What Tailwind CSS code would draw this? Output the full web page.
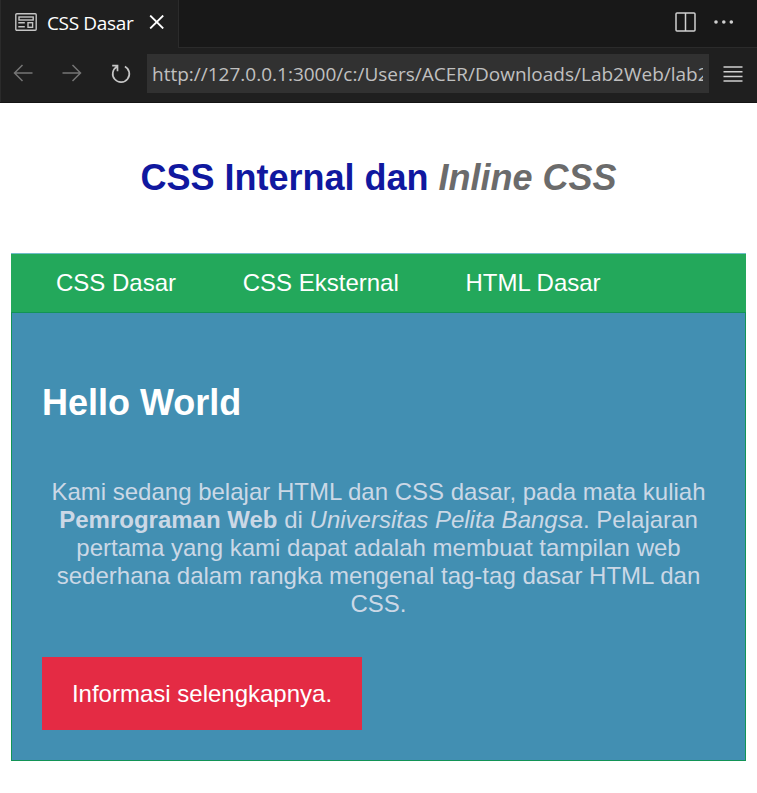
<!DOCTYPE html>
<html lang="id">
<head>
<meta charset="utf-8">
<title>CSS Dasar</title>
<script src="https://cdn.jsdelivr.net/npm/@tailwindcss/browser@4"></script>
</head>
<body class="bg-white w-[757px] h-[793px] overflow-hidden font-['Liberation_Sans',Arial,sans-serif]">
<header class="h-[103px] bg-[#1f1f1f] border-b border-[#141414] font-['Open_Sans',sans-serif]">
  <div class="flex h-12">
    <div class="flex w-[179px] items-center border-x border-[#2b2b2b] pl-[14px] text-white">
      <svg class="-mt-1 h-[18px] w-[22px] shrink-0" viewBox="0 0 22 18" fill="none" stroke="#c5c5c5" stroke-width="1.4"><rect x=".8" y=".8" width="20.4" height="16.4" rx="1"/><rect x="4" y="4" width="14.2" height="3"/><path d="M3.3 9.7h6.5M3.3 13.7h6.5"/><rect x="13" y="9.7" width="4.6" height="4.6"/></svg>
      <span class="-mt-[2px] ml-[10px] w-[88px] whitespace-nowrap text-[19px] leading-6 tracking-[-0.35px]">CSS Dasar</span>
      <svg class="-mt-1 ml-[14px] h-[14px] w-[15px] shrink-0" viewBox="0 0 15 14" fill="none" stroke="#fff" stroke-width="1.8"><path d="M1.2 .5l13 13M14.2 .5l-13 13"/></svg>
    </div>
    <div class="flex flex-1 items-center justify-end border-b border-[#2b2b2b] bg-[#181818] pr-[23px]">
      <svg class="-mt-1 h-5 w-[21px]" viewBox="0 0 21 20" fill="none" stroke="#d0d0d0" stroke-width="1.5"><rect x="1" y="1" width="19" height="18" rx="1"/><path d="M10.5 1v18"/></svg>
      <svg class="-mt-[3px] ml-[18px] h-1 w-5" viewBox="0 0 20 4" fill="#d0d0d0"><circle cx="2" cy="2" r="1.8"/><circle cx="9.8" cy="2" r="1.8"/><circle cx="17.3" cy="2" r="1.8"/></svg>
    </div>
  </div>
  <div class="flex h-[54px] items-start border-l border-[#2b2b2b] pl-3 pt-[6px]">
    <svg class="mt-[10px] h-[18px] w-5 shrink-0" viewBox="0 0 20 18" fill="none" stroke="#757575" stroke-width="1.5"><path d="M19.5 9H1.5M9.5 1L1.5 9l8 8"/></svg>
    <svg class="ml-[29px] mt-[10px] h-[18px] w-5 shrink-0" viewBox="0 0 20 18" fill="none" stroke="#757575" stroke-width="1.5"><path d="M.5 9h18M10.5 1l8 8-8 8"/></svg>
    <svg class="ml-[29px] mt-[10px] h-5 w-5 shrink-0" viewBox="0 0 20 20" fill="none" stroke="#c5c5c5" stroke-width="1.7"><path d="M13.9 2.5A8.3 8.3 0 1 1 5.8 2.7M1.2 1.7h5.3v5.6"/></svg>
    <div class="ml-4 h-[39px] w-[562px] shrink-0 bg-[#313131] pl-[5px] pr-[6px]"><div class="overflow-hidden whitespace-nowrap text-[19px] leading-[41px] text-[#c0c0c0]">http://127.0.0.1:3000/c:/Users/ACER/Downloads/Lab2Web/lab2</div></div>
    <svg class="ml-[14px] mt-3 h-4 w-5 shrink-0" viewBox="0 0 20 16" stroke="#d0d0d0" stroke-width="1.5"><path d="M.5 1h19M.5 5.7h19M.5 10.4h19M.5 15h19"/></svg>
  </div>
</header>
<main class="px-[11px]">
  <h1 class="pt-[54px] text-center text-[36px] leading-[41px] font-bold whitespace-nowrap text-[#10189f]">CSS Internal dan <i class="text-[#6b6b6b]">Inline CSS</i></h1>
  <nav class="mt-[55px] flex h-[59px] gap-[66.7px] border-t border-[#70bcc8] bg-[#23a85b] pl-[45px] text-[24px] leading-[58px] whitespace-nowrap text-white">
    <a>CSS Dasar</a><a>CSS Eksternal</a><a>HTML Dasar</a>
  </nav>
  <section class="h-[449px] border border-[#129456] bg-[#428fb2] px-[30px] pt-[69px]">
    <h2 class="text-[36px] leading-[41px] font-bold text-white">Hello World</h2>
    <p class="mt-[55px] text-center text-[24px] leading-7 whitespace-nowrap text-[#cbd8e6]">Kami sedang belajar HTML dan CSS dasar, pada mata kuliah<br><b>Pemrograman Web</b> di <i>Universitas Pelita Bangsa</i>. Pelajaran<br>pertama yang kami dapat adalah membuat tampilan web<br>sederhana dalam rangka mengenal tag-tag dasar HTML dan<br>CSS.</p>
    <a class="mt-[39px] block h-[73px] w-[320px] bg-[#e42b44] text-center text-[24px] leading-[73px] whitespace-nowrap text-white">Informasi selengkapnya.</a>
  </section>
</main>
</body>
</html>
